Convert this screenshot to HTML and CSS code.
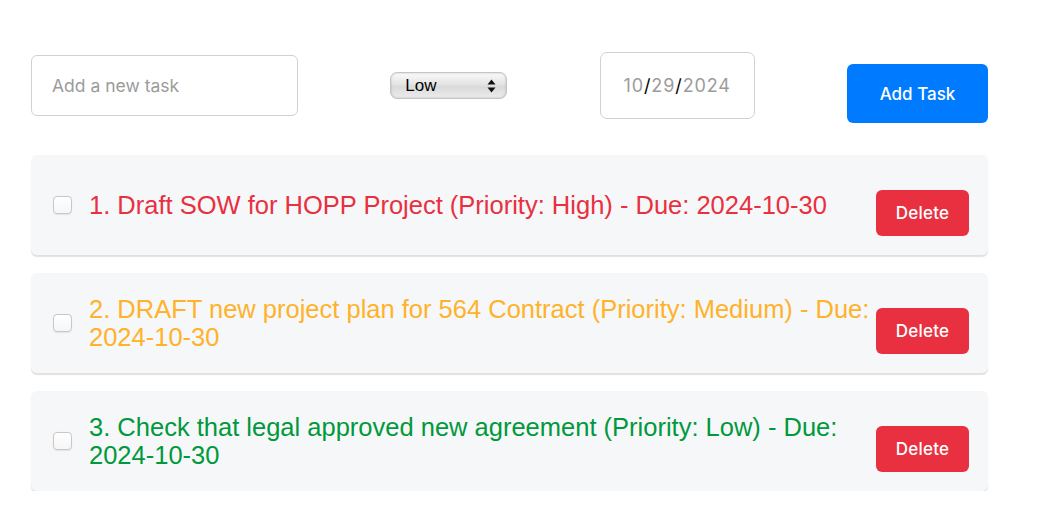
FILE: index.html
```html
<!DOCTYPE html>
<html lang="en">
<head>
<meta charset="utf-8">
<title>Tasks</title>
<link rel="stylesheet" href="styles.css">
</head>
<body>
<div class="app">
  <div class="toolbar">
    <input class="task-input" type="text" placeholder="Add a new task">
    <span class="select-wrap">
      <select class="priority">
        <option>Low</option>
        <option>Medium</option>
        <option>High</option>
      </select>
      <svg class="select-arrows" width="9" height="14" viewBox="0 0 9 14"><path d="M4.5 0.5 L8.5 5.5 H0.5 Z" fill="#111"/><path d="M4.5 13.5 L8.5 8.5 H0.5 Z" fill="#111"/></svg>
    </span>
    <div class="date-input"><span class="dp">10</span><span class="ds">/</span><span class="dp">29</span><span class="ds">/</span><span class="dp">2024</span></div>
    <button class="btn btn-primary">Add Task</button>
  </div>
  <ul class="tasks">
    <li class="task">
      <input class="check" type="checkbox">
      <span class="task-text high">1. Draft SOW for HOPP Project (Priority: High) - Due: <span class="nw">2024-10-30</span></span>
      <button class="btn btn-danger">Delete</button>
    </li>
    <li class="task">
      <input class="check" type="checkbox">
      <span class="task-text medium">2. DRAFT new project plan for 564 Contract (Priority: Medium) - Due: <span class="nw">2024-10-30</span></span>
      <button class="btn btn-danger">Delete</button>
    </li>
    <li class="task">
      <input class="check" type="checkbox">
      <span class="task-text low">3. Check that legal approved new agreement (Priority: Low) - Due: <span class="nw">2024-10-30</span></span>
      <button class="btn btn-danger">Delete</button>
    </li>
  </ul>
</div>
</body>
</html>
```
FILE: styles.css
```css
* { box-sizing: border-box; }
html, body { margin: 0; padding: 0; background: #fff; }
body { font-family: Inter, "Noto Sans", sans-serif; }

.app {
  width: 957px;
  margin-left: 31px;
  padding-top: 48px;
}

.toolbar {
  display: flex;
  align-items: center;
  justify-content: space-between;
  height: 75px;
}

.task-input {
  width: 267px;
  height: 61px;
  padding: 0 20px;
  border: 1.5px solid #cdd2d8;
  border-radius: 6px;
  font-family: Inter, sans-serif;
  font-size: 17.5px;
  color: #222;
  outline: none;
}
.task-input::placeholder { color: #9b9b9b; }

.select-wrap {
  position: relative;
  display: inline-block;
  width: 117px;
  height: 27px;
}
.priority {
  appearance: none;
  -webkit-appearance: none;
  width: 117px;
  height: 27px;
  padding: 0 0 0 14px;
  border: 1px solid #c2c5c9;
  border-radius: 7px;
  background: linear-gradient(#fafafa, #e4e4e4 45%, #dadada 55%, #ececec);
  box-shadow: inset 0 0 2px rgba(0,0,0,0.25);
  font-family: "Liberation Sans", Arial, sans-serif;
  font-size: 17px;
  color: #000;
  outline: none;
}
.select-arrows {
  position: absolute;
  right: 11px;
  top: 7px;
  pointer-events: none;
}

.date-input {
  width: 155px;
  height: 67px;
  border: 1.5px solid #cdd2d8;
  border-radius: 7px;
  display: flex;
  align-items: center;
  justify-content: center;
  font-family: Inter, sans-serif;
  font-size: 18px;
  letter-spacing: 0.9px;
}
.dp { color: #9b9b9b; }
.ds { color: #000; }

.btn {
  border: none;
  border-radius: 6px;
  color: #fff;
  font-family: Inter, sans-serif;
  cursor: pointer;
  margin-top: 16px;
}
.btn-primary {
  width: 141px;
  height: 59px;
  background: #007bff;
  font-size: 17px;
  font-weight: 500;
}
.btn-danger {
  width: 93px;
  height: 46px;
  background: #e83040;
  font-size: 17px;
  font-weight: 500;
  letter-spacing: 0.2px;
  flex: none;
}

.tasks {
  list-style: none;
  margin: 32px 0 0;
  padding: 0;
  display: flex;
  flex-direction: column;
  gap: 18px;
}
.task {
  display: flex;
  align-items: center;
  height: 100px;
  padding: 0 19px 0 22px;
  background: #f6f7f9;
  border-radius: 6px;
  box-shadow: 0 2px 1px rgba(0,0,0,0.12);
}
.check {
  appearance: none;
  -webkit-appearance: none;
  flex: none;
  width: 19px;
  height: 18px;
  margin: 0 17px 0 0;
  border: 1px solid #c8c8c8;
  border-radius: 4px;
  background: linear-gradient(#fff, #f6f6f6);
  box-shadow: 0 0.5px 1px rgba(0,0,0,0.08);
}
.task-text {
  flex: 1;
  padding-right: 6px;
  font-family: "Liberation Sans", Arial, Helvetica, sans-serif;
  font-size: 25.5px;
  line-height: 28px;
}
.nw { white-space: nowrap; }
.high { color: #e8303f; }
.medium { color: #ffb22a; }
.low { color: #00993c; }
```
